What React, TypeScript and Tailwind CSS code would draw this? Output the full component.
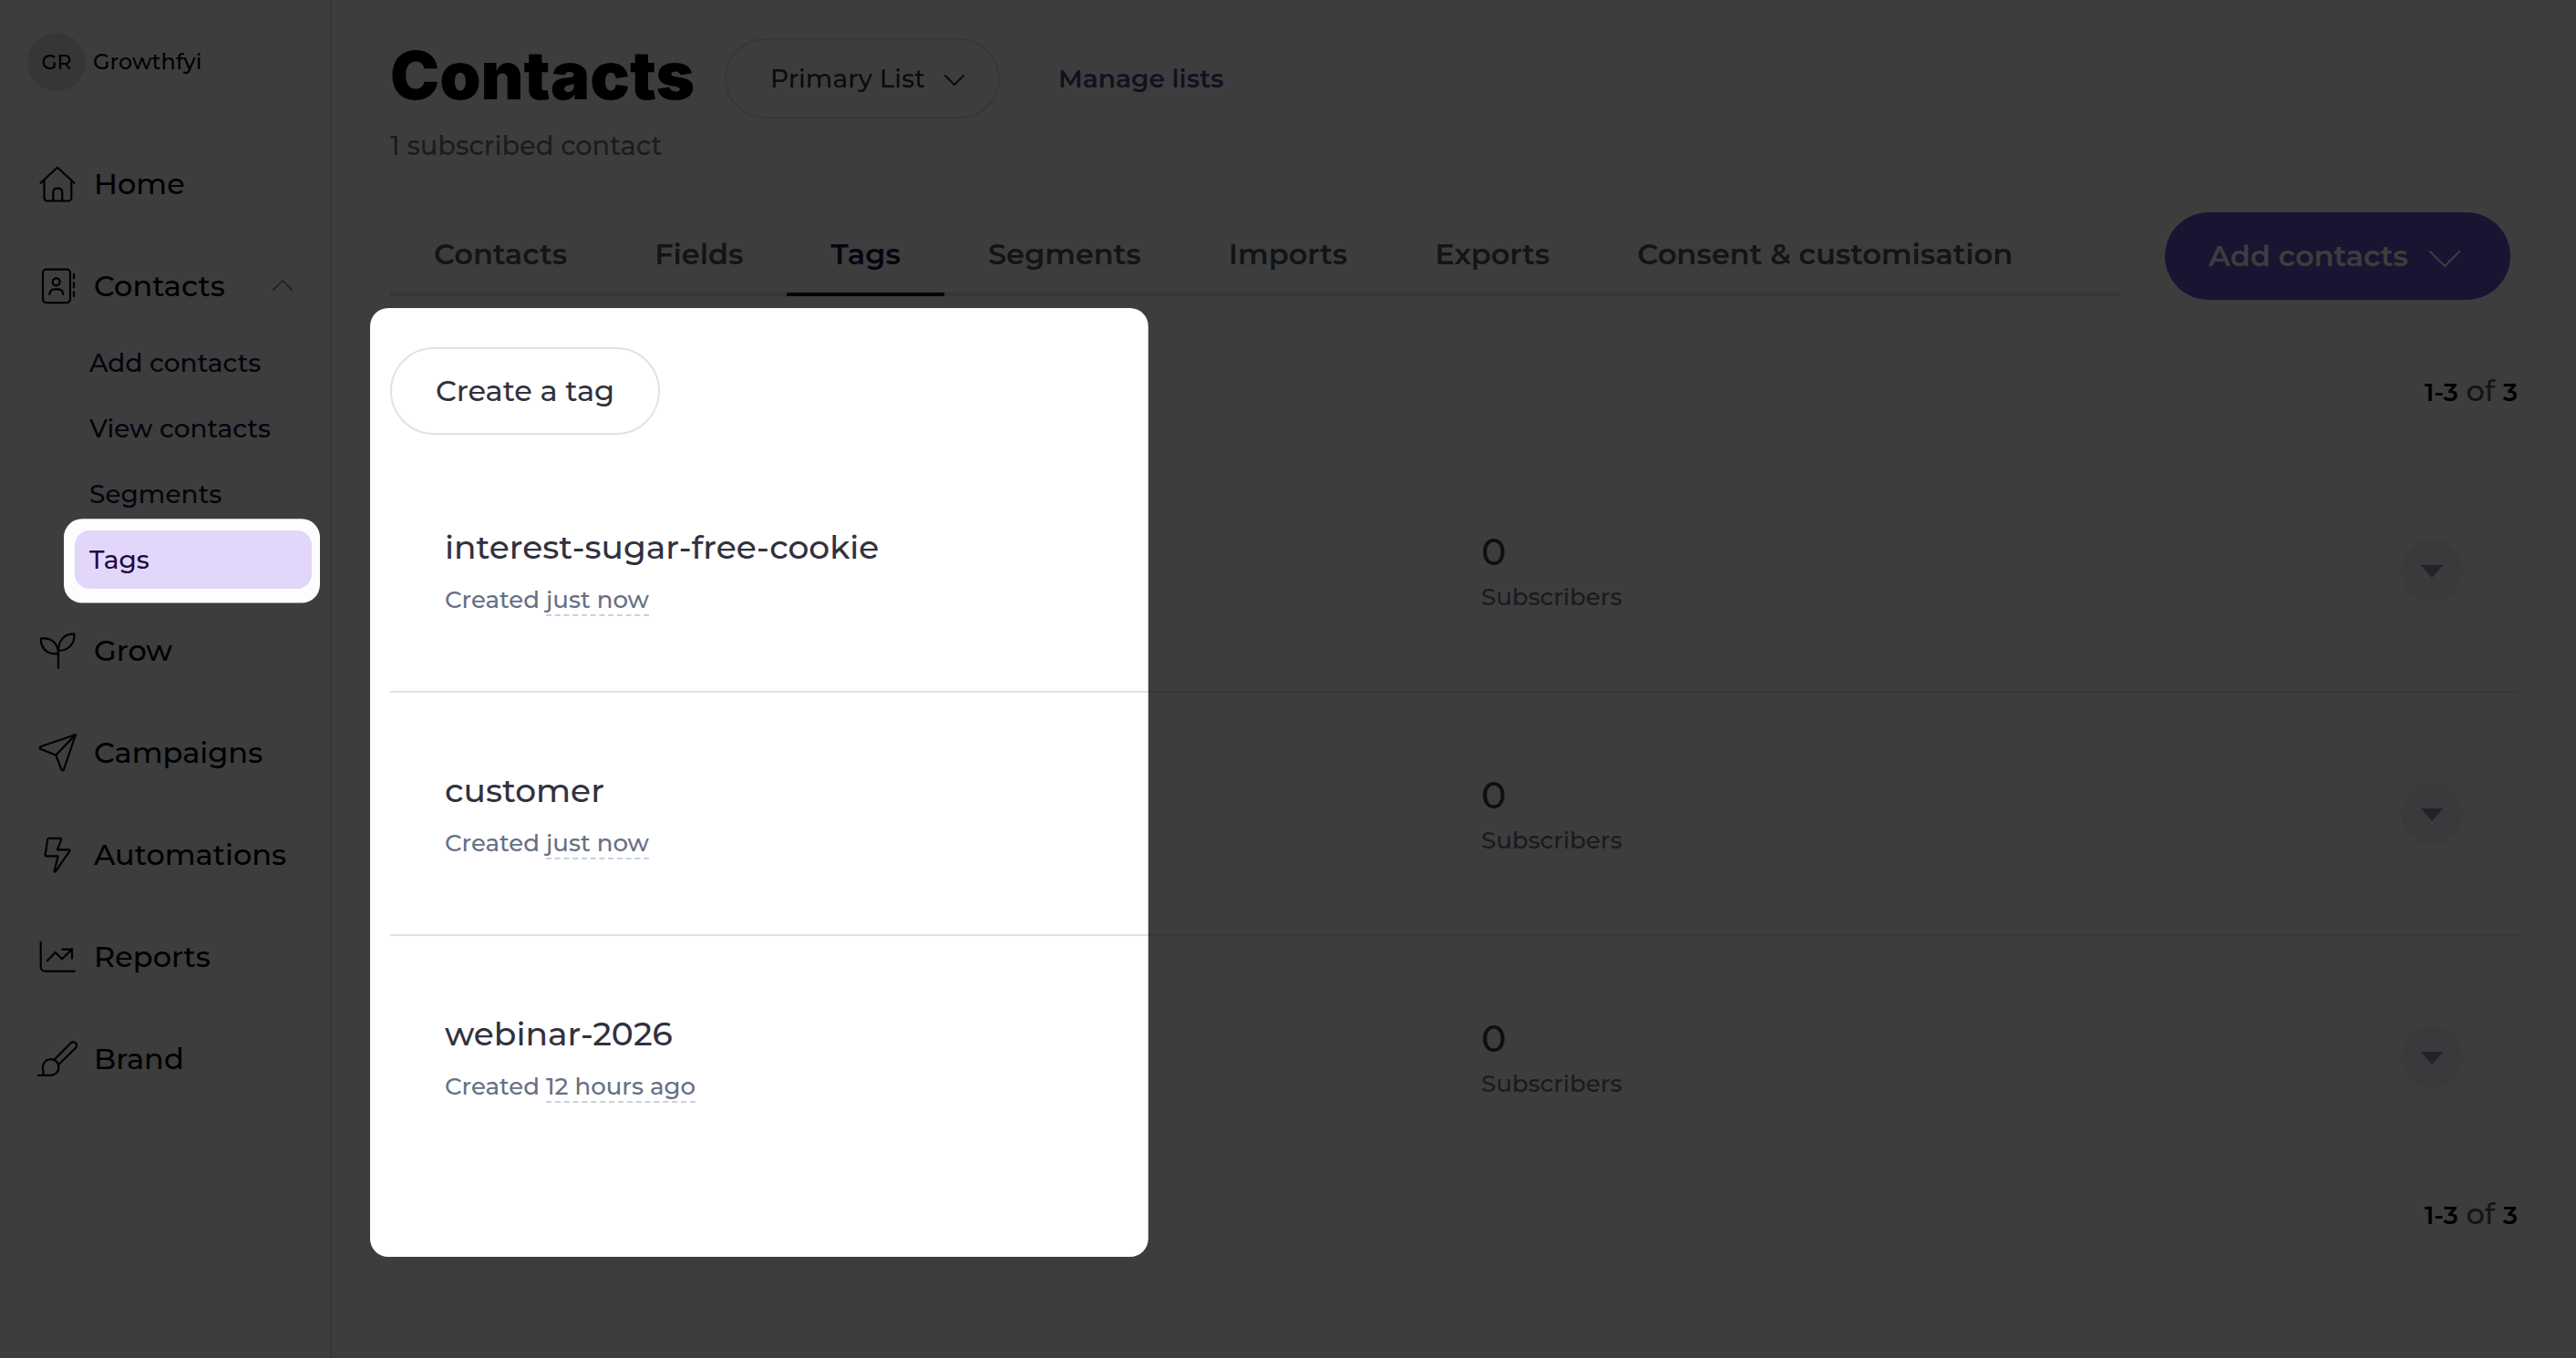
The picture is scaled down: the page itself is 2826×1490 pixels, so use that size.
import type { ReactNode } from "react";
import { twMerge } from "tailwind-merge";

type NavItem = { label: string; icon: ReactNode; children?: string[] };

const navItems: NavItem[] = [
  {
    label: "Home",
    icon: (
      <>
        <path d="M5.5 23.8 24 6.8l18.5 17" />
        <path d="M9.5 20.5V40a3.5 3.5 0 0 0 3.5 3.5h22.8a3.5 3.5 0 0 0 3.5-3.5V20.5" />
        <path d="M19.3 43.5V34.5c0-3 1.6-4.900 4.2-4.900h1.600c2.600 0 4.200 1.900 4.200 4.900v9" />
      </>
    ),
  },
  {
    label: "Contacts",
    icon: (
      <>
        <rect x="8" y="6.7" width="30" height="36.4" rx="3.5" />
        <circle cx="22.7" cy="20.3" r="4" />
        <path d="M15.4 34c0-3.5 2-5.6 5.5-5.6h3.8c3.5 0 5.5 2.1 5.5 5.6" />
        <path d="M42 11.5v5M42 21.3v5M42 31v5" />
      </>
    ),
    children: ["Add contacts", "View contacts", "Segments", "Tags"],
  },
  {
    label: "Grow",
    icon: (
      <>
        <path d="M5.8 11.6C16.5 10 25 16.5 25 28.2 13 29.8 5.6 22.5 5.8 11.6z" />
        <path d="M42.5 6.6C32 6 25 13.5 25.2 25 36.5 24.8 43.2 17 42.5 6.6z" />
        <path d="M25 25v19" />
      </>
    ),
  },
  {
    label: "Campaigns",
    icon: (
      <>
        <path d="M44 5 5.4 18.3a1.3 1.3 0 0 0 0 2.4l16.9 6.7 6.2 16.2a1.3 1.3 0 0 0 2.4 0z" />
        <path d="M22.3 27.4 44 5" />
      </>
    ),
  },
  {
    label: "Automations",
    icon: (
      <path d="M14.6 6.8h12.6a1 1 0 0 1 1 1.3L23.9 19.4h12.7a1 1 0 0 1 .8 1.5L21.9 43.2c-.5.7-1.4.4-1.2-.6l4-16.3H11.6a1 1 0 0 1-1-1.1l2.7-17.3a1.2 1.2 0 0 1 1.3-1.1z" />
    ),
  },
  {
    label: "Reports",
    icon: (
      <>
        <path d="M5.7 8.8v26.9a5 5 0 0 0 5 5h32" />
        <path d="m13 29 8.7-9 7.3 7.2 11-10.6" />
        <path d="M29.5 16.6H40v10" />
      </>
    ),
  },
  {
    label: "Brand",
    icon: (
      <>
        <path d="M3 42.8h13.7a8.8 8.8 0 1 0-8.8-8.8c0 3.4 1.3 5.6.4 8.8" />
        <path d="M20.3 25.9 38.6 7.4a3.7 3.7 0 0 1 5.4 5.4L25.4 31" />
      </>
    ),
  },
];

const tabs: string[] = [
  "Contacts",
  "Fields",
  "Tags",
  "Segments",
  "Imports",
  "Exports",
  "Consent & customisation",
];

const tags = [
  { name: "interest-sugar-free-cookie", created: "just now", subscribers: 0 },
  { name: "customer", created: "just now", subscribers: 0 },
  { name: "webinar-2026", created: "12 hours ago", subscribers: 0 },
];

const Sidebar = () => {
  return (
    <aside className="w-[364px] h-full shrink-0 border-r-2 border-[#e6e6ea] bg-[#fdfdfd] text-black">
      {/* Account */}
      <div className="flex items-center gap-2 pl-[30px] pt-9">
        <div className="size-16 rounded-full bg-[#e3e3e4] flex items-center justify-center text-[22px]">
          GR
        </div>
        <span className="text-2xl">Growthfyi</span>
      </div>
      {/* Nav */}
      <nav className="mt-[45px] flex flex-col">
        {navItems.map((item) => (
          <div key={item.label}>
            <div className="h-28 flex items-center pl-[39px] pr-[41px]">
              <svg
                viewBox="0 0 48 48"
                className="size-12 mr-4"
                fill="none"
                stroke="currentColor"
                strokeWidth="2.2"
                strokeLinecap="round"
                strokeLinejoin="round"
              >
                {item.icon}
              </svg>
              <span className="pt-0.5 text-[32px] leading-10">
                {item.label}
              </span>
              {item.children && (
                <svg
                  viewBox="0 0 22 12"
                  className="w-[22px] h-3 ml-auto text-[#7f7e8c]"
                  fill="none"
                  stroke="currentColor"
                  strokeWidth="1.6"
                >
                  <path d="M.5 11.5 11 1l10.5 10.5" />
                </svg>
              )}
            </div>
            {item.children && (
              <div className="ml-[82px] w-[260px] -mt-[3px] mb-[11px] flex flex-col gap-2">
                {item.children.map((child) => (
                  <div
                    key={child}
                    className={twMerge(
                      "h-16 pl-4 rounded-2xl flex items-center text-[28px] text-[#240a3f]",
                      child === "Tags" && "bg-[#e2d7fb]"
                    )}
                  >
                    {child}
                  </div>
                ))}
              </div>
            )}
          </div>
        ))}
      </nav>
    </aside>
  );
};

const Range = ({ className }: { className?: string }) => (
  <div className={twMerge("text-[32px] leading-10 text-[#4f5461]", className)}>
    <span className="text-[28px] font-semibold text-black">1-3</span> of{" "}
    <span className="text-[28px] font-semibold text-black">3</span>
  </div>
);

const TagRow = ({ tag }: { tag: (typeof tags)[number] }) => (
  <div className="h-[267px] flex items-start px-[60px] border-b-2 border-[#dce1ec] last:border-transparent">
    <div className="w-[1137px] pt-[83px]">
      <div className="text-4xl leading-[48px] text-[#32313f]">{tag.name}</div>
      <div className="mt-3.5 text-[26px] leading-10 text-[#667085]">
        Created{" "}
        <span className="border-b-2 border-dashed border-[#cbd0e0]">
          {tag.created}
        </span>
      </div>
    </div>
    <div className="pt-[88px]">
      <div className="text-[41px] leading-[48px] text-[#38434a]">
        {tag.subscribers}
      </div>
      <div className="mt-1.5 text-[26px] leading-10 text-[#6d7286]">
        Subscribers
      </div>
    </div>
    <button className="ml-auto mt-[99px] size-[68px] rounded-full bg-[#e9f1fa] flex items-center justify-center">
      <svg viewBox="0 0 24 14" className="w-6 h-3.5 mt-0.5 fill-[#8a929e]">
        <path d="M0 0h24L12 14z" />
      </svg>
    </button>
  </div>
);

/* Dark layer of the walkthrough, with the two highlighted areas cut out */
const Spotlight = () => (
  <svg
    viewBox="0 0 2826 1490"
    className="absolute inset-0 w-full h-full pointer-events-none"
  >
    <path
      fillOpacity="0.76"
      fillRule="evenodd"
      d="M0 0H2826V1490H0z
        M90 569.3H331a20 20 0 0 1 20 20V641.5a20 20 0 0 1-20 20H90a20 20 0 0 1-20-20V589.3a20 20 0 0 1 20-20z
        M426 338H1239.7a20 20 0 0 1 20 20V1359a20 20 0 0 1-20 20H426a20 20 0 0 1-20-20V358a20 20 0 0 1 20-20z"
    />
  </svg>
);

export default function App() {
  return (
    <div className="relative w-[2826px] h-[1490px] overflow-hidden flex bg-white font-medium font-[Montserrat,Inter,sans-serif]">
      <Sidebar />
      <main className="flex-1 px-16 pt-[42px]">
        {/* Header */}
        <div className="flex items-center h-[88px]">
          <h1 className="w-[335px] mr-8 pb-[7px] text-[72.5px] leading-[80px] font-black text-black font-[Inter,sans-serif]">
            Contacts
          </h1>
          <button className="w-[302px] h-full rounded-full border-2 border-[#e2e0ec] pl-12 flex items-center text-[28px] text-[#32313f]">
            Primary List
            <svg
              viewBox="0 0 22 12"
              className="w-[22px] h-3 ml-[21px] mt-1"
              fill="none"
              stroke="currentColor"
              strokeWidth="2"
              strokeLinecap="round"
            >
              <path d="M1 1l10 10L21 1" />
            </svg>
          </button>
          <a className="ml-16 text-[28px] font-semibold text-[#4f4487]">
            Manage lists
          </a>
        </div>
        <p className="mt-2.5 text-[28.8px] leading-10 text-[#6f7685]">
          1 subscribed contact
        </p>

        {/* Tabs */}
        <div className="mt-[53px] flex items-start justify-between pr-2">
          <div className="w-[1899px] h-[92px] flex border-b-4 border-[#e2e3ec]">
            {tabs.map((tab) => (
              <div
                key={tab}
                className={twMerge(
                  "h-[92px] px-12 pt-[26px] text-[32px] leading-10 font-semibold whitespace-nowrap text-[#4f5461]",
                  tab === "Tags" && "border-b-4 border-[#240a3f] text-[#240a3f]"
                )}
              >
                {tab}
              </div>
            ))}
          </div>
          <button className="w-[379px] h-24 rounded-full bg-[#6b55cc] pl-12 flex items-center text-[32px] font-semibold text-white">
            Add contacts
            <svg
              viewBox="0 0 34 18"
              className="w-[34px] h-[18px] ml-[23px] mt-1.5"
              fill="none"
              stroke="currentColor"
              strokeWidth="2"
              strokeLinecap="round"
            >
              <path d="M1 1l16 16L33 1" />
            </svg>
          </button>
        </div>

        {/* Toolbar */}
        <div className="mt-[52px] h-24 flex items-center justify-between">
          <button className="w-[296px] h-full rounded-full border-2 border-[#e2e0ec] text-[32px] text-[#32313f]">
            Create a tag
          </button>
          <Range />
        </div>

        {/* Tag list */}
        <div className="mt-4">
          {tags.map((tag) => (
            <TagRow key={tag.name} tag={tag} />
          ))}
        </div>
        <Range className="mt-[18px] text-right" />
      </main>
      <Spotlight />
    </div>
  );
}
